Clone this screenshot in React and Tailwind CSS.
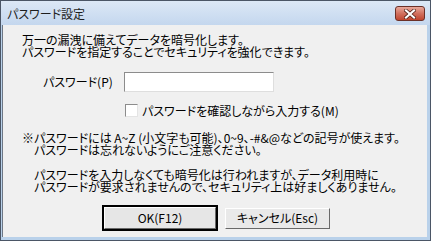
export default function App() {
  const font = "font-['Noto_Sans_CJK_JP','Noto_Sans',sans-serif] [font-feature-settings:'palt']";
  return (
    <div className={`w-[431px] h-[241px] flex flex-col bg-[#b9d1ea] border border-[#4b5666] ${font} text-[12px] leading-[12px] text-black`}>
      {/* Title bar */}
      <div className="h-[24px] flex items-center justify-between bg-gradient-to-b from-[#dce8f6] to-[#c4d7ee] pl-[6px] pr-[5px]">
        <span className="text-[12px] leading-[12px] text-[#1e1e1e] pt-[1px]">パスワード設定</span>
        <div className="w-[30px] h-[15px] mt-[1px] rounded-[3px] border border-[#6b3027] bg-gradient-to-b from-[#e8a89b] via-[#d1705e] to-[#c0442e] flex items-center justify-center">
          <svg width="12" height="10" viewBox="0 0 12 10">
            <path d="M2 1.5 L10 8.5 M10 1.5 L2 8.5" stroke="#4a1a12" strokeWidth="3.6" strokeLinecap="square" />
            <path d="M2 1.5 L10 8.5 M10 1.5 L2 8.5" stroke="#ffffff" strokeWidth="2.2" strokeLinecap="square" />
          </svg>
        </div>
      </div>
      {/* Client */}
      <div className="flex-1 flex ml-[1px] mr-[3px] mb-[3px] border-l border-[#6d7785]">
        <div className="flex-1 bg-[#f0f0f0] pl-[19px] pt-[9px]">
          <p>万一の漏洩に備えてデータを暗号化します。</p>
          <p>パスワードを指定することでセキュリティを強化できます。</p>
          <div className="flex items-center mt-[14px]">
            <span className="w-[102px] pl-[21px]">パスワード(P)</span>
            <div className="w-[150px] h-[20px] bg-white border border-t-[#8c8c8c] border-l-[#8c8c8c] border-r-[#dedede] border-b-[#dedede]" />
          </div>
          <div className="flex items-center mt-[12px] pl-[103px]">
            <div className="w-[13px] h-[13px] bg-white border border-t-[#8c8c8c] border-l-[#8c8c8c] border-r-[#e4e4e4] border-b-[#e4e4e4]" />
            <span className="ml-[4px]">パスワードを確認しながら入力する(M)</span>
          </div>
          <div className="mt-[15px]">
            <p>※パスワードには A~Z (小文字も可能)、0~9、-#&amp;@などの記号が使えます。</p>
            <p className="pl-[12px]">パスワードは忘れないようにご注意ください。</p>
          </div>
          <div className="mt-[13px] pl-[12px]">
            <p>パスワードを入力しなくても暗号化は行われますが、データ利用時に</p>
            <p>パスワードが要求されませんので、セキュリティ上は好ましくありません。</p>
          </div>
          <div className="flex items-center mt-[12px] pl-[80px]">
            <div className="w-[116px] h-[26px] border-2 border-black flex">
              <div className="flex-1 border border-t-white border-l-white border-r-[#696969] border-b-[#696969] bg-[#e6e6e6] flex items-center justify-center">
                <span>OK(F12)</span>
              </div>
            </div>
            <div className="ml-[7px] w-[105px] h-[21px] border border-t-white border-l-white border-r-[#696969] border-b-[#696969] bg-[#e9e9e9] flex items-center justify-center">
              <span>キャンセル(Esc)</span>
            </div>
          </div>
        </div>
      </div>
    </div>
  );
}
